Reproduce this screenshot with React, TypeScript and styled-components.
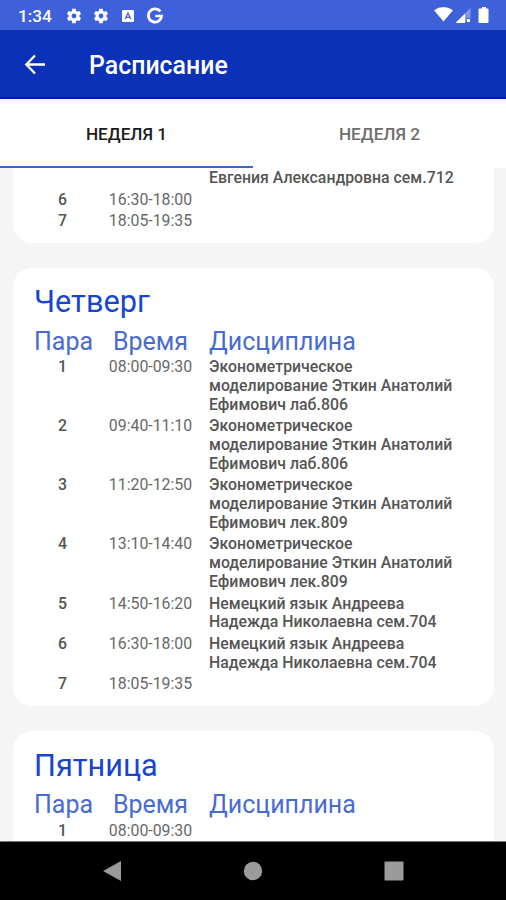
import React from "react";
import styled, { createGlobalStyle } from "styled-components";

const Global = createGlobalStyle`
  * { box-sizing: border-box; }
  body { margin: 0; background: #f5f5f5; }
`;

const Screen = styled.div`
  width: 506px;
  height: 900px;
  display: flex;
  flex-direction: column;
  overflow: hidden;
  font-family: Roboto, "Liberation Sans", sans-serif;
  background: #f5f5f5;
`;

const StatusBar = styled.div`
  flex: none;
  height: 30px;
  display: flex;
  align-items: center;
  padding: 1px 16px 0 18px;
  background: #3e61da;
  color: #fff;
`;

const Clock = styled.span`
  width: 47px;
  font-size: 17.2px;
  font-weight: 500;
  line-height: 28px;
`;

const Notifications = styled.div`
  display: flex;
  align-items: center;
  flex: 1;
  gap: 9px;
  svg { display: block; }
`;

const Indicators = styled.div`
  display: flex;
  align-items: center;
  margin-top: -2px;
  svg { display: block; }
`;

const AppBar = styled.header`
  flex: none;
  height: 69px;
  display: flex;
  align-items: center;
  padding: 0 23px;
  background: #0a31b8;
  border-bottom: 2px solid #0516a8;
  color: #fff;
`;

const Title = styled.h1`
  margin: 4px 0 0 42px;
  font-size: 24.9px;
  font-weight: 500;
  line-height: 30px;
`;

const Tabs = styled.nav`
  flex: none;
  height: 69px;
  display: grid;
  grid-template-columns: 1fr 1fr;
  background: linear-gradient(#f1f1ee 0, #fff 5px);
`;

const Tab = styled.div<{ $active?: boolean }>`
  display: flex;
  align-items: center;
  justify-content: center;
  padding-top: 2px;
  font-size: 17.2px;
  font-weight: 500;
  color: ${(p) => (p.$active ? "#1c1c1c" : "#6e6e6e")};
  border-bottom: 2px solid ${(p) => (p.$active ? "#3768cf" : "transparent")};
`;

const List = styled.main`
  flex: 1;
  min-height: 0;
  overflow: hidden;
  display: flex;
  flex-direction: column;
  gap: 25px;
  padding: 0 12px 0 13px;
`;

const Card = styled.section<{ $continued?: boolean; $open?: boolean }>`
  flex: ${(p) => (p.$open ? "1 0 auto" : "none")};
  padding: ${(p) => (p.$continued ? "1px 21px 8.5px" : p.$open ? "14.5px 21px 0" : "14.5px 21px 9px")};
  border-radius: ${(p) => (p.$continued ? "0 0 19px 19px" : p.$open ? "19px 19px 0 0" : "19px")};
  background: #fff;
`;

const Day = styled.h2`
  margin: 0;
  font-size: 30.7px;
  font-weight: 400;
  line-height: 40px;
  color: #1745d2;
`;

const Row = styled.div`
  display: grid;
  grid-template-columns: 57px 119px 250px;
  column-gap: 0;
  margin-bottom: 3px;
  line-height: 18.7px;
  font-size: 15.85px;
  color: #555;

  & > :last-child { margin-left: -1px; }
`;

const HeaderRow = styled(Row)`
  margin: 3.5px 0 1.5px;
  line-height: 31px;
  font-size: 25px;
  color: #486bd3;
`;

const HeadCell = styled.span<{ $center?: boolean }>`
  text-align: ${(p) => (p.$center ? "center" : "left")};
`;

const NumberCell = styled.span`
  text-align: center;
  font-weight: 500;
`;

const TimeCell = styled.span`
  text-align: center;
  color: #686868;
`;

const Subject = styled.span`
  font-weight: 500;
  white-space: pre-line;
`;

const NavBar = styled.footer`
  flex: none;
  height: 59px;
  display: flex;
  align-items: center;
  justify-content: space-between;
  padding: 0 102px;
  background: #000;
  border-top: 1px solid #777;
  svg { display: block; }
`;

type Lesson = [number | null, string, string];

const econ = (room: string) => `Эконометрическое\nмоделирование Эткин Анатолий\nЕфимович ${room}`;
const german = "Немецкий язык Андреева\nНадежда Николаевна сем.704";

const wednesday: Lesson[] = [
  [null, "", "Евгения Александровна сем.712"],
  [6, "16:30-18:00", ""],
  [7, "18:05-19:35", ""],
];

const thursday: Lesson[] = [
  [1, "08:00-09:30", econ("лаб.806")],
  [2, "09:40-11:10", econ("лаб.806")],
  [3, "11:20-12:50", econ("лек.809")],
  [4, "13:10-14:40", econ("лек.809")],
  [5, "14:50-16:20", german],
  [6, "16:30-18:00", german],
  [7, "18:05-19:35", ""],
];

const friday: Lesson[] = [[1, "08:00-09:30", ""]];

function DayCard({ day, lessons, open }: { day?: string; lessons: Lesson[]; open?: boolean }) {
  return (
    <Card $continued={!day} $open={open}>
      {day && <Day>{day}</Day>}
      {day && (
        <HeaderRow>
          <HeadCell>Пара</HeadCell>
          <HeadCell $center>Время</HeadCell>
          <HeadCell>Дисциплина</HeadCell>
        </HeaderRow>
      )}
      {lessons.map(([n, time, subject], i) => (
        <Row key={i}>
          <NumberCell>{n}</NumberCell>
          <TimeCell>{time}</TimeCell>
          <Subject>{subject}</Subject>
        </Row>
      ))}
    </Card>
  );
}

const Gear = () => (
  <svg width="18" height="18" viewBox="0 0 24 24" fill="#fff">
    <path d="M19.14 12.94c.04-.3.06-.61.06-.94s-.02-.64-.07-.94l2.03-1.58a.49.49 0 0 0 .12-.61l-1.92-3.32a.49.49 0 0 0-.59-.22l-2.39.96c-.5-.38-1.03-.7-1.62-.94l-.36-2.54a.48.48 0 0 0-.48-.41h-3.84c-.24 0-.43.17-.47.41l-.36 2.54c-.59.24-1.13.57-1.62.94l-2.39-.96a.48.48 0 0 0-.59.22L2.74 8.87a.48.48 0 0 0 .12.61l2.03 1.58c-.05.3-.09.63-.09.94s.02.64.07.94l-2.03 1.58a.49.49 0 0 0-.12.61l1.92 3.32c.12.22.37.29.59.22l2.39-.96c.5.38 1.03.7 1.62.94l.36 2.54c.05.24.24.41.48.41h3.84c.24 0 .44-.17.47-.41l.36-2.54c.59-.24 1.13-.56 1.62-.94l2.39.96c.22.08.47 0 .59-.22l1.92-3.32a.48.48 0 0 0-.12-.61l-2.01-1.58zM12 15.2a3.2 3.2 0 1 1 0-6.4 3.2 3.2 0 0 1 0 6.4z" />
  </svg>
);

export default function App() {
  return (
    <Screen>
      <Global />
      <StatusBar>
        <Clock>1:34</Clock>
        <Notifications>
          <Gear />
          <Gear />
          <svg width="18" height="14" viewBox="-2 0 18 14">
            <rect x="1" y="1" width="12" height="12" rx="1" fill="#fff" />
            <path d="M4.200 10 7 4l2.800 6M5.2 8.400h3.6" fill="none" stroke="#3e61da" strokeWidth="1.3" />
          </svg>
          <svg width="18" height="18" viewBox="0 0 18 18">
            <path d="M14.3 4.5A6.6 6.6 0 1 0 15.6 9H9.3" fill="none" stroke="#fff" strokeWidth="2.7" />
          </svg>
        </Notifications>
        <Indicators>
          <svg width="56" height="18" viewBox="0 0 56 18" fill="#fff">
            <path d="M0 4.2Q9.5-2 19 4.200L9.5 15.500Z" />
            <path d="M36.5 2v10h-4v4H22.500Z" fillOpacity=".35" />
            <path d="M31 7.500V17h-9.500Z" />
            <rect x="33" y="13" width="3" height="3" />
            <path d="M48 1h4v1.500h1.500a1 1 0 0 1 1 1V16a1 1 0 0 1-1 1h-8a1 1 0 0 1-1-1V3.500a1 1 0 0 1 1-1h2.500Z" />
          </svg>
        </Indicators>
      </StatusBar>
      <AppBar>
        <svg width="24" height="24" viewBox="0 0 24 24" fill="none" stroke="#fff" strokeWidth="2.3">
          <path d="M22 12.500H4M12 3.500 3.300 12.500 12 21.500" />
        </svg>
        <Title>Расписание</Title>
      </AppBar>
      <Tabs>
        <Tab $active>НЕДЕЛЯ 1</Tab>
        <Tab>НЕДЕЛЯ 2</Tab>
      </Tabs>
      <List>
        <DayCard lessons={wednesday} />
        <DayCard day="Четверг" lessons={thursday} />
        <DayCard day="Пятница" lessons={friday} open />
      </List>
      <NavBar>
        <svg width="20" height="22" viewBox="0 0 20 22"><path d="M1 11 19 1v20Z" fill="#9b9b9b" /></svg>
        <svg width="20" height="20" viewBox="0 0 20 20"><circle cx="10" cy="10" r="9.200" fill="#9b9b9b" /></svg>
        <svg width="20" height="20" viewBox="0 0 20 20"><rect x=".5" y=".5" width="19" height="19" rx="1" fill="#9b9b9b" /></svg>
      </NavBar>
    </Screen>
  );
}
